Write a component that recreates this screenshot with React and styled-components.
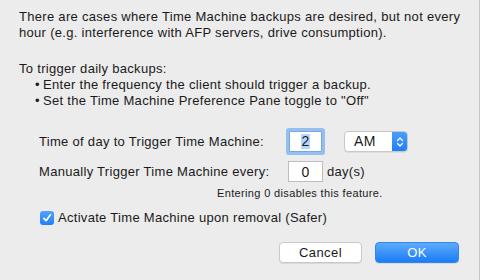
import React, { useState } from 'react'
import styled, { createGlobalStyle } from 'styled-components';

const GlobalStyle = createGlobalStyle`
  html, body {
    margin: 0;
    padding: 0;
    background: #ececec;
  }
  body {
    font-family: "Liberation Sans", Arial, sans-serif;
    color: #1a1a1a;
  }
`;

function Checkmark() {
  return (
    <svg width="10" height="10" viewBox="0 0 10 10">
      <path d="M1.8 5.3 L4.1 7.7 L8.4 1.8" fill="none" stroke="#fff" strokeWidth="1.7" strokeLinecap="round" strokeLinejoin="round" />
    </svg>
  );
}

function Stepper() {
  return (
    <svg width="8" height="12" viewBox="0 0 8 12">
      <path d="M1.5 4.5 L4 2 L6.5 4.5 M1.5 7.5 L4 10 L6.5 7.5" fill="none" stroke="#fff" strokeWidth="1.3" strokeLinecap="round" strokeLinejoin="round" />
    </svg>
  );
}

function App() {
  const [hour] = useState("2");
  const [days] = useState("0");
  const [safer, setSafer] = useState(true);

  return (
    <>
      <GlobalStyle />
      <Dialog>
        <Text>
          There are cases where Time Machine backups are desired, but not every
          hour (e.g. interference with AFP servers, drive consumption).
        </Text>
        <Text $gap>To trigger daily backups:</Text>
        <Bullets>
          <li>Enter the frequency the client should trigger a backup.</li>
          <li>Set the Time Machine Preference Pane toggle to "Off"</li>
        </Bullets>

        <Form>
          <Label>Time of day to Trigger Time Machine:</Label>
          <Field>
            <NumberBox $focused>
              <Selected>{hour}</Selected>
            </NumberBox>
            <Popup>
              <span>AM</span>
              <PopupArrows><Stepper /></PopupArrows>
            </Popup>
          </Field>

          <Label>Manually Trigger Time Machine every:</Label>
          <Field>
            <NumberBox>{days}</NumberBox>
            <Unit>day(s)</Unit>
          </Field>
        </Form>

        <Hint>Entering 0 disables this feature.</Hint>

        <CheckRow onClick={() => setSafer(!safer)}>
          <CheckBox $checked={safer}>{safer && <Checkmark />}</CheckBox>
          Activate Time Machine upon removal (Safer)
        </CheckRow>

        <Buttons>
          <Button>Cancel</Button>
          <Button $primary>OK</Button>
        </Buttons>
      </Dialog>
    </>
  );
}

const Dialog = styled.div`
  box-sizing: border-box;
  width: 480px;
  height: 280px;
  padding: 9px 0 0 19px;
  border-right: 1px solid #c4c4c4;
  font-size: 13px;
  line-height: 16px;
  letter-spacing: 0.3px;
  overflow: hidden;
`;

const Text = styled.p`
  margin: ${({ $gap }) => ($gap ? '20px' : '0')} 0 0;
`;

const Bullets = styled.ul`
  margin: 0;
  padding: 0 0 0 16px;
  list-style: none;
  li::before {
    content: "•";
    display: inline-block;
    width: 8px;
  }
`;

const Form = styled.div`
  display: grid;
  grid-template-columns: 249px auto;
  row-gap: 9px;
  align-items: center;
  margin: 22px 0 0 20px;
`;

const Label = styled.div``;

const Field = styled.div`
  display: flex;
  align-items: center;
  height: 21px;
`;

const NumberBox = styled.div`
  box-sizing: border-box;
  width: ${({ $focused }) => ($focused ? '33px' : '35px')};
  height: 21px;
  margin-left: ${({ $focused }) => ($focused ? '1px' : '0')};
  background: #fff;
  border: 1px solid ${({ $focused }) => ($focused ? '#7aa6dc' : '#bdbdbd')};
  box-shadow: ${({ $focused }) => ($focused ? '0 0 0 3px #94bff2' : 'none')};
  border-radius: ${({ $focused }) => ($focused ? '1px' : '0')};
  display: flex;
  align-items: center;
  justify-content: center;
  font-size: 14px;
  letter-spacing: 0;
`;

const Selected = styled.span`
  background: #b4d6fd;
  line-height: 15px;
  padding: 0 1px;
`;

const Popup = styled.div`
  box-sizing: border-box;
  display: flex;
  align-items: stretch;
  width: 64px;
  height: 21px;
  margin-left: 22px;
  background: #fff;
  border: 1px solid #c8c8c8;
  border-radius: 4px;
  overflow: hidden;
  box-shadow: 0 1px 0 rgba(0, 0, 0, 0.06);
  span {
    flex: 1;
    padding-left: 9px;
    line-height: 19px;
    font-size: 14px;
  }
`;

const PopupArrows = styled.div`
  width: 16px;
  margin: -1px -1px -1px 0;
  background: linear-gradient(#4aa0fb, #1c7df6);
  display: flex;
  align-items: center;
  justify-content: center;
`;

const Unit = styled.span`
  margin-left: 4px;
`;

const Hint = styled.div`
  margin: 5px 0 0 198px;
  font-size: 11px;
  line-height: 13px;
  letter-spacing: 0.35px;
`;

const CheckRow = styled.label`
  display: flex;
  align-items: center;
  gap: 4px;
  margin: 10px 0 0 21px;
  height: 16px;
  cursor: default;
`;

const CheckBox = styled.span`
  box-sizing: border-box;
  width: 14px;
  height: 14px;
  border-radius: 3px;
  display: flex;
  align-items: center;
  justify-content: center;
  background: ${({ $checked }) => ($checked ? 'linear-gradient(#52a3fb, #1f7ff6)' : '#fff')};
  border: ${({ $checked }) => ($checked ? 'none' : '1px solid #b5b5b5')};
`;

const Buttons = styled.div`
  display: flex;
  gap: 13px;
  margin: 16px 0 0 260px;
`;

const Button = styled.button`
  box-sizing: border-box;
  width: ${({ $primary }) => ($primary ? '84px' : '83px')};
  height: 21px;
  padding: 0;
  font-family: inherit;
  font-size: 13px;
  letter-spacing: 0.4px;
  border-radius: 4px;
  color: ${({ $primary }) => ($primary ? '#fff' : '#1a1a1a')};
  background: ${({ $primary }) => ($primary ? 'linear-gradient(#5eabfc, #1a7cf6)' : '#fff')};
  border: 1px solid ${({ $primary }) => ($primary ? '#2f86f5' : '#c9c9c9')};
  box-shadow: 0 1px 0 rgba(0, 0, 0, 0.08);
`;

export default App;
